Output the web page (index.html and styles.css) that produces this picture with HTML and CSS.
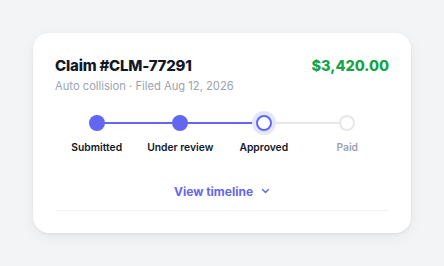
FILE: index.html
```html
<!DOCTYPE html>
<html>
<head>
<meta charset="utf-8">
<link rel="stylesheet" href="styles.css">
</head>
<body>
<div class="card">
  <div class="header">
    <div>
      <div class="title">Claim #CLM-77291</div>
      <div class="sub">Auto collision · Filed Aug 12, 2026</div>
    </div>
    <div class="amount">$3,420.00</div>
  </div>
  <div class="stepper">
    <div class="step done line-done"><span class="dot"></span><span class="label">Submitted</span></div>
    <div class="step done line-done"><span class="dot"></span><span class="label">Under review</span></div>
    <div class="step current line-todo"><span class="dot"></span><span class="label">Approved</span></div>
    <div class="step todo"><span class="dot"></span><span class="label">Paid</span></div>
  </div>
  <div class="toggle">
    <span>View timeline</span>
    <svg width="9" height="6" viewBox="0 0 9 6"><path d="M1.5 1.5 L4.5 4.5 L7.5 1.5" fill="none" stroke="#6366f1" stroke-width="1.4" stroke-linecap="round" stroke-linejoin="round"/></svg>
  </div>
  <div class="divider"></div>
</div>
</body>
</html>
```
FILE: styles.css
```css
* { box-sizing: border-box; }
html, body { margin: 0; }
body {
  background: #f3f4f6;
  font-family: Inter, "Noto Sans", sans-serif;
  padding: 33px;
  width: 444px;
  height: 266px;
}
.card {
  width: 378px;
  background: #ffffff;
  border-radius: 16px;
  padding: 23px 22px 22px;
  box-shadow: 0 4px 14px rgba(17, 24, 39, 0.06), 0 1px 3px rgba(17, 24, 39, 0.05);
}
.header {
  display: flex;
  justify-content: space-between;
  align-items: flex-start;
}
.title {
  font-size: 15px;
  line-height: 20px;
  font-weight: 800;
  letter-spacing: -0.2px;
  color: #111827;
}
.sub {
  margin-top: 3px;
  font-size: 11.2px;
  line-height: 14px;
  color: #9ca3af;
}
.amount {
  font-size: 14.5px;
  line-height: 20px;
  font-weight: 800;
  color: #16a34a;
}
.stepper {
  margin-top: 22px;
  display: grid;
  grid-template-columns: repeat(4, 1fr);
}
.step {
  position: relative;
  display: flex;
  flex-direction: column;
  align-items: center;
}
.step::after {
  content: "";
  position: absolute;
  top: 7px;
  left: 50%;
  width: 100%;
  height: 2px;
}
.line-done::after { background: #6366f1; }
.line-todo::after { background: #e5e7eb; }
.todo::after { display: none; }
.dot {
  position: relative;
  z-index: 1;
  width: 16px;
  height: 16px;
  border-radius: 50%;
}
.done .dot { background: #6366f1; }
.current .dot {
  background: #ffffff;
  border: 2px solid #6366f1;
  box-shadow: 0 0 0 4px #e0e7ff;
}
.todo .dot {
  background: #ffffff;
  border: 2px solid #e5e7eb;
}
.label {
  margin-top: 9px;
  font-size: 10.3px;
  line-height: 14px;
  font-weight: 600;
  color: #111827;
}
.todo .label { color: #9ca3af; }
.toggle {
  margin-top: 27px;
  height: 20px;
  display: flex;
  justify-content: center;
  align-items: center;
  gap: 8px;
  font-size: 12px;
  font-weight: 700;
  color: #6366f1;
}
.divider {
  margin-top: 9px;
  height: 1px;
  background: #f1f2f5;
}
```
